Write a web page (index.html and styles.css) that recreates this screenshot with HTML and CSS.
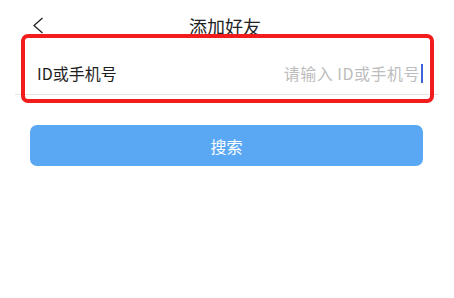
FILE: index.html
```html
<!DOCTYPE html>
<html lang="zh-CN">
<head>
<meta charset="utf-8">
<title>添加好友</title>
<link rel="stylesheet" href="styles.css">
</head>
<body>
<div class="page">
  <header class="nav">
    <span class="back">
      <svg width="12" height="17" viewBox="0 0 12 17"><polyline points="10.5,1 2,8.5 10.5,16" fill="none" stroke="#222" stroke-width="1.3" stroke-linejoin="miter"/></svg>
    </span>
    <h1 class="title">添加好友</h1>
    <span></span>
  </header>
  <div class="field">
    <span class="label">ID或手机号</span>
    <span class="input"><span class="placeholder">请输入 ID或手机号</span><span class="caret"></span></span>
  </div>
  <button class="search">搜索</button>
  <div class="highlight"></div>
</div>
</body>
</html>
```

FILE: styles.css
```css
* { box-sizing: border-box; }
html, body { margin: 0; padding: 0; background: #fff; }
body {
  font-family: "Noto Sans CJK SC", "Noto Sans", sans-serif;
  color: #222;
}
.page {
  position: relative;
  width: 454px;
  height: 298px;
  overflow: hidden;
}
.nav {
  display: grid;
  grid-template-columns: 1fr auto 1fr;
  align-items: start;
  height: 38px;
  padding-top: 16px;
}
.back {
  padding-left: 32px;
  padding-top: 1px;
  display: flex;
}
.title {
  margin: 0;
  font-size: 18px;
  font-weight: 400;
  line-height: 20px;
  color: #222;
  margin-left: -4px;
}
.field {
  display: flex;
  align-items: center;
  justify-content: space-between;
  height: 57px;
  margin: 0 15px;
  padding: 14px 16px 0 22px;
  border-bottom: 1px solid #e3e3e3;
}
.label {
  font-size: 16px;
  line-height: 20px;
  color: #1e1e1e;
}
.input {
  display: flex;
  align-items: center;
}
.placeholder {
  font-size: 16px;
  line-height: 20px;
  letter-spacing: 0.5px;
  color: #bdbdbd;
}
.caret {
  width: 2px;
  height: 19px;
  background: #3f63d8;
  margin-left: 1px;
}
.search {
  display: block;
  margin: 30px 0 0 30px;
  width: 393px;
  height: 41px;
  border: 0;
  border-radius: 7px;
  background: #5aa8f4;
  color: #fff;
  font-family: "Noto Sans CJK SC", "Noto Sans", sans-serif;
  font-size: 16px;
  line-height: 20px;
  padding: 0;
}
.highlight {
  position: absolute;
  left: 21px;
  top: 34px;
  width: 413px;
  height: 69px;
  border: 4px solid #f21c1c;
  border-radius: 7px;
  pointer-events: none;
}
```
